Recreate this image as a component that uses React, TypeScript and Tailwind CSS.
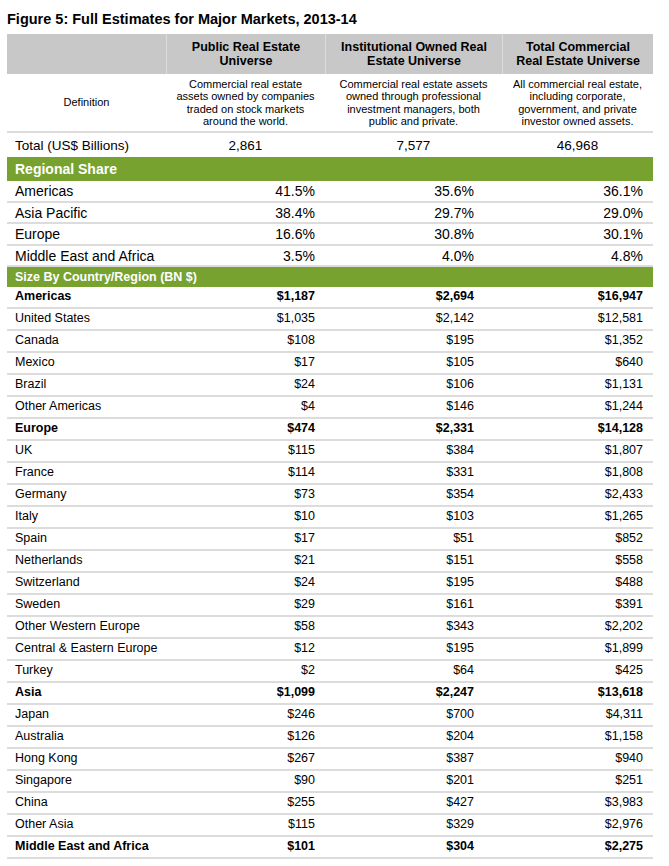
import React from "react";

type Row = { label: string; a: string; b: string; c: string; bold?: boolean };

const regional: Row[] = [
  { label: "Americas", a: "41.5%", b: "35.6%", c: "36.1%" },
  { label: "Asia Pacific", a: "38.4%", b: "29.7%", c: "29.0%" },
  { label: "Europe", a: "16.6%", b: "30.8%", c: "30.1%" },
  { label: "Middle East and Africa", a: "3.5%", b: "4.0%", c: "4.8%" },
];

const data: Row[] = [
  { label: "Americas", a: "$1,187", b: "$2,694", c: "$16,947", bold: true },
  { label: "United States", a: "$1,035", b: "$2,142", c: "$12,581" },
  { label: "Canada", a: "$108", b: "$195", c: "$1,352" },
  { label: "Mexico", a: "$17", b: "$105", c: "$640" },
  { label: "Brazil", a: "$24", b: "$106", c: "$1,131" },
  { label: "Other Americas", a: "$4", b: "$146", c: "$1,244" },
  { label: "Europe", a: "$474", b: "$2,331", c: "$14,128", bold: true },
  { label: "UK", a: "$115", b: "$384", c: "$1,807" },
  { label: "France", a: "$114", b: "$331", c: "$1,808" },
  { label: "Germany", a: "$73", b: "$354", c: "$2,433" },
  { label: "Italy", a: "$10", b: "$103", c: "$1,265" },
  { label: "Spain", a: "$17", b: "$51", c: "$852" },
  { label: "Netherlands", a: "$21", b: "$151", c: "$558" },
  { label: "Switzerland", a: "$24", b: "$195", c: "$488" },
  { label: "Sweden", a: "$29", b: "$161", c: "$391" },
  { label: "Other Western Europe", a: "$58", b: "$343", c: "$2,202" },
  { label: "Central & Eastern Europe", a: "$12", b: "$195", c: "$1,899" },
  { label: "Turkey", a: "$2", b: "$64", c: "$425" },
  { label: "Asia", a: "$1,099", b: "$2,247", c: "$13,618", bold: true },
  { label: "Japan", a: "$246", b: "$700", c: "$4,311" },
  { label: "Australia", a: "$126", b: "$204", c: "$1,158" },
  { label: "Hong Kong", a: "$267", b: "$387", c: "$940" },
  { label: "Singapore", a: "$90", b: "$201", c: "$251" },
  { label: "China", a: "$255", b: "$427", c: "$3,983" },
  { label: "Other Asia", a: "$115", b: "$329", c: "$2,976" },
  { label: "Middle East and Africa", a: "$101", b: "$304", c: "$2,275", bold: true },
];

const cols = "grid grid-cols-[159px_159px_177px_151px]";

export default function App() {
  return (
    <div className="w-[669px] h-[866px] bg-white text-black pl-[7px] pt-[11px] font-['Liberation_Sans',Arial,sans-serif]">
      <div className="text-[14.5px] font-bold leading-[16px] h-[23px]">
        Figure 5: Full Estimates for Major Markets, 2013-14
      </div>
      <div className="w-[646px]">
        {/* header */}
        <div className={`${cols} h-[40px] bg-[#c8c8c8] text-[12.5px] font-bold leading-[14px] text-center`}>
          <div />
          <div className="flex items-center justify-center border-l border-[#dcdcdc]">
            Public Real Estate<br />Universe
          </div>
          <div className="flex items-center justify-center border-l border-[#dcdcdc]">
            Institutional Owned Real<br />Estate Universe
          </div>
          <div className="flex items-center justify-center border-l border-[#dcdcdc]">
            Total Commercial<br />Real Estate Universe
          </div>
        </div>
        {/* definition */}
        <div className={`${cols} h-[59px] border-b-2 border-[#dcdcdc] text-[11px] leading-[12.5px] text-center`}>
          <div className="flex items-center justify-center">Definition</div>
          <div className="flex items-center justify-center">
            <div>
              Commercial real estate<br />assets owned by companies<br />traded on stock markets<br />around the world.
            </div>
          </div>
          <div className="flex items-center justify-center">
            <div>
              Commercial real estate assets<br />owned through professional<br />investment managers, both<br />public and private.
            </div>
          </div>
          <div className="flex items-center justify-center">
            <div>
              All commercial real estate,<br />including corporate,<br />government, and private<br />investor owned assets.
            </div>
          </div>
        </div>
        {/* total */}
        <div className={`${cols} h-[24px] text-[13.5px] items-center pt-[2px]`}>
          <div className="pl-[8px]">Total (US$ Billions)</div>
          <div className="text-center">2,861</div>
          <div className="text-center">7,577</div>
          <div className="text-center">46,968</div>
        </div>
        {/* regional share band */}
        <div className="h-[24px] bg-[#77a22f] text-white font-bold text-[14px] flex items-center pl-[8px]">
          Regional Share
        </div>
        {regional.map((r) => (
          <div
            key={r.label}
            className={`${cols} h-[21.5px] border-b-2 border-[#dcdcdc] text-[14px] items-center`}
          >
            <div className="pl-[8px] whitespace-nowrap">{r.label}</div>
            <div className="text-right pr-[10px]">{r.a}</div>
            <div className="text-right pr-[28px]">{r.b}</div>
            <div className="text-right pr-[10px]">{r.c}</div>
          </div>
        ))}
        {/* size band */}
        <div className="h-[20px] bg-[#77a22f] text-white font-bold text-[12.5px] flex items-center pl-[8px]">
          Size By Country/Region (BN $)
        </div>
        {data.map((r) => (
          <div
            key={r.label}
            className={`${cols} h-[22px] border-b-2 border-[#dcdcdc] text-[12.5px] items-center pb-[1px] ${r.bold ? "font-bold" : ""}`}
          >
            <div className="pl-[8px] whitespace-nowrap">{r.label}</div>
            <div className="text-right pr-[10px]">{r.a}</div>
            <div className="text-right pr-[28px]">{r.b}</div>
            <div className="text-right pr-[10px]">{r.c}</div>
          </div>
        ))}
      </div>
    </div>
  );
}
